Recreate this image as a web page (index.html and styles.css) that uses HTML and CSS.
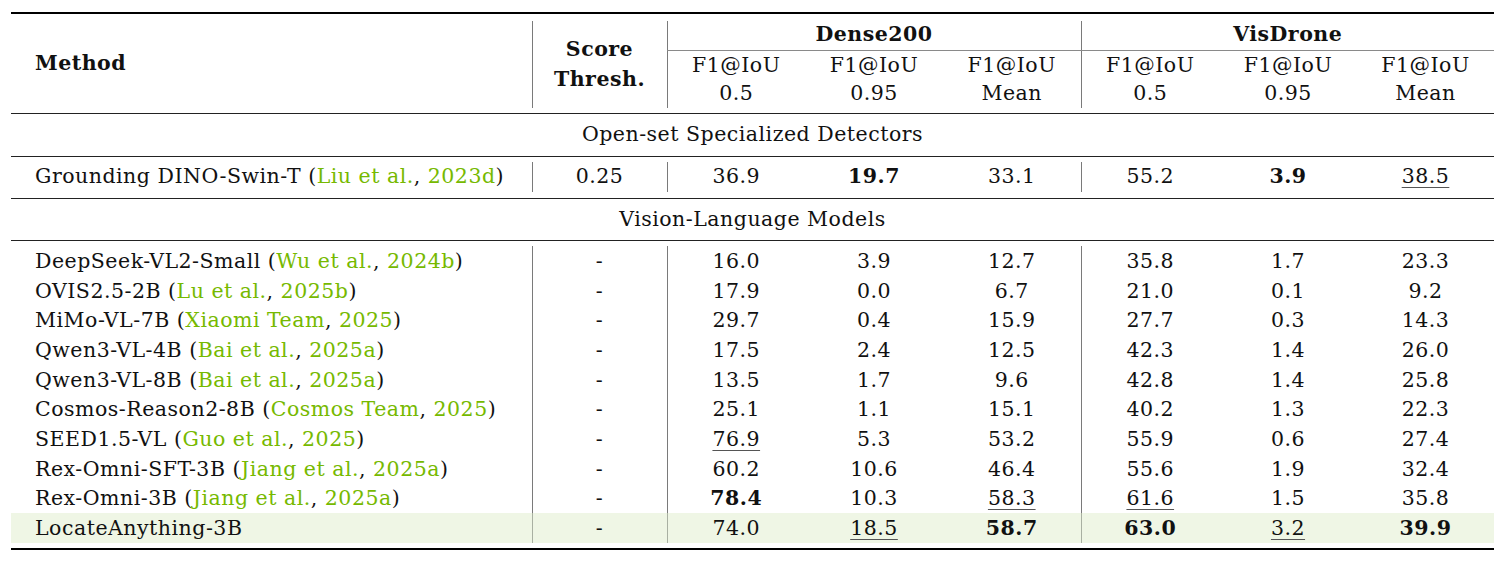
FILE: index.html
```html
<!DOCTYPE html>
<html>
<head>
<meta charset="utf-8">
<link rel="stylesheet" href="styles.css">
</head>
<body>
<table class="tbl">
  <colgroup>
    <col class="c-method"><col class="c-score">
    <col class="c-num"><col class="c-num"><col class="c-num">
    <col class="c-num"><col class="c-num"><col class="c-last">
  </colgroup>
  <tr class="rule"><td colspan="8"><div class="line thick"></div><div class="gap g7"></div></td></tr>
  <tr class="hA">
    <td rowspan="2" class="method b mhead">Method</td>
    <td rowspan="2" class="bl b ctr two score">Score<br>Thresh.</td>
    <td colspan="3" class="bl b ctr cmid">Dense200</td>
    <td colspan="3" class="bl b ctr cmid">VisDrone</td>
  </tr>
  <tr class="hB">
    <td class="bl ctr two">F1@IoU<br>0.5</td>
    <td class="ctr two">F1@IoU<br>0.95</td>
    <td class="ctr two">F1@IoU<br>Mean</td>
    <td class="bl ctr two">F1@IoU<br>0.5</td>
    <td class="ctr two">F1@IoU<br>0.95</td>
    <td class="ctr two">F1@IoU<br>Mean</td>
  </tr>
  <tr class="rule"><td colspan="8"><div class="gap g5"></div><div class="line"></div></td></tr>
  <tr class="sec"><td colspan="8" class="ctr">Open-set Specialized Detectors</td></tr>
  <tr class="rule"><td colspan="8"><div class="line"></div><div class="gap g5"></div></td></tr>
  <tr class="row one">
    <td class="method">Grounding DINO-Swin-T (<span class="cite">Liu et al.</span>, <span class="cite">2023d</span>)</td>
    <td class="bl ctr">0.25</td>
    <td class="bl ctr">36.9</td><td class="ctr b">19.7</td><td class="ctr">33.1</td>
    <td class="bl ctr">55.2</td><td class="ctr b">3.9</td><td class="ctr"><span class="u">38.5</span></td>
  </tr>
  <tr class="rule"><td colspan="8"><div class="gap g6"></div><div class="line"></div></td></tr>
  <tr class="sec sec2"><td colspan="8" class="ctr">Vision-Language Models</td></tr>
  <tr class="rule"><td colspan="8"><div class="line"></div><div class="gap g5"></div></td></tr>
  <tr class="row">
    <td class="method">DeepSeek-VL2-Small (<span class="cite">Wu et al.</span>, <span class="cite">2024b</span>)</td>
    <td class="bl ctr">-</td>
    <td class="bl ctr">16.0</td><td class="ctr">3.9</td><td class="ctr">12.7</td>
    <td class="bl ctr">35.8</td><td class="ctr">1.7</td><td class="ctr">23.3</td>
  </tr>
  <tr class="row">
    <td class="method">OVIS2.5-2B (<span class="cite">Lu et al.</span>, <span class="cite">2025b</span>)</td>
    <td class="bl ctr">-</td>
    <td class="bl ctr">17.9</td><td class="ctr">0.0</td><td class="ctr">6.7</td>
    <td class="bl ctr">21.0</td><td class="ctr">0.1</td><td class="ctr">9.2</td>
  </tr>
  <tr class="row">
    <td class="method">MiMo-VL-7B (<span class="cite">Xiaomi Team</span>, <span class="cite">2025</span>)</td>
    <td class="bl ctr">-</td>
    <td class="bl ctr">29.7</td><td class="ctr">0.4</td><td class="ctr">15.9</td>
    <td class="bl ctr">27.7</td><td class="ctr">0.3</td><td class="ctr">14.3</td>
  </tr>
  <tr class="row">
    <td class="method">Qwen3-VL-4B (<span class="cite">Bai et al.</span>, <span class="cite">2025a</span>)</td>
    <td class="bl ctr">-</td>
    <td class="bl ctr">17.5</td><td class="ctr">2.4</td><td class="ctr">12.5</td>
    <td class="bl ctr">42.3</td><td class="ctr">1.4</td><td class="ctr">26.0</td>
  </tr>
  <tr class="row">
    <td class="method">Qwen3-VL-8B (<span class="cite">Bai et al.</span>, <span class="cite">2025a</span>)</td>
    <td class="bl ctr">-</td>
    <td class="bl ctr">13.5</td><td class="ctr">1.7</td><td class="ctr">9.6</td>
    <td class="bl ctr">42.8</td><td class="ctr">1.4</td><td class="ctr">25.8</td>
  </tr>
  <tr class="row">
    <td class="method">Cosmos-Reason2-8B (<span class="cite">Cosmos Team</span>, <span class="cite">2025</span>)</td>
    <td class="bl ctr">-</td>
    <td class="bl ctr">25.1</td><td class="ctr">1.1</td><td class="ctr">15.1</td>
    <td class="bl ctr">40.2</td><td class="ctr">1.3</td><td class="ctr">22.3</td>
  </tr>
  <tr class="row">
    <td class="method">SEED1.5-VL (<span class="cite">Guo et al.</span>, <span class="cite">2025</span>)</td>
    <td class="bl ctr">-</td>
    <td class="bl ctr"><span class="u">76.9</span></td><td class="ctr">5.3</td><td class="ctr">53.2</td>
    <td class="bl ctr">55.9</td><td class="ctr">0.6</td><td class="ctr">27.4</td>
  </tr>
  <tr class="row">
    <td class="method">Rex-Omni-SFT-3B (<span class="cite">Jiang et al.</span>, <span class="cite">2025a</span>)</td>
    <td class="bl ctr">-</td>
    <td class="bl ctr">60.2</td><td class="ctr">10.6</td><td class="ctr">46.4</td>
    <td class="bl ctr">55.6</td><td class="ctr">1.9</td><td class="ctr">32.4</td>
  </tr>
  <tr class="row">
    <td class="method">Rex-Omni-3B (<span class="cite">Jiang et al.</span>, <span class="cite">2025a</span>)</td>
    <td class="bl ctr">-</td>
    <td class="bl ctr b">78.4</td><td class="ctr">10.3</td><td class="ctr"><span class="u">58.3</span></td>
    <td class="bl ctr"><span class="u">61.6</span></td><td class="ctr">1.5</td><td class="ctr">35.8</td>
  </tr>
  <tr class="row hl">
    <td class="method">LocateAnything-3B</td>
    <td class="bl ctr">-</td>
    <td class="bl ctr">74.0</td><td class="ctr"><span class="u">18.5</span></td><td class="ctr b">58.7</td>
    <td class="bl ctr b">63.0</td><td class="ctr"><span class="u">3.2</span></td><td class="ctr b">39.9</td>
  </tr>
  <tr class="rule"><td colspan="8"><div class="gap g5"></div><div class="line thick"></div></td></tr>
</table>
</body>
</html>
```
FILE: styles.css
```css
html, body {
  margin: 0;
  padding: 0;
  background: #fff;
}
body {
  padding-top: 12px;
  font-family: "DejaVu Serif", "Liberation Serif", serif;
  font-size: 20.5px;
  letter-spacing: 0.5px;
  color: #111;
}
.tbl {
  margin-left: 11px;
  width: 1483px;
  border-collapse: collapse;
  table-layout: fixed;
}
.c-method { width: 521px; }
.c-score { width: 135px; }
.c-num { width: 138px; }
.c-last { width: 137px; }
.tbl td {
  padding: 0;
  white-space: nowrap;
  vertical-align: middle;
  line-height: 20px;
}
.line { height: 1px; background: #222; }
.line.thick { height: 2px; background: #000; }
.g4 { height: 4px; }
.g5 { height: 5px; }
.g6 { height: 6px; }
.g7 { height: 7px; }
.bl { border-left: 1px solid #7a7a7a; }
.b { font-weight: bold; }
.ctr { text-align: center; }
.tbl td.method { padding-left: 24px; text-align: left; }
.hA { height: 29px; }
.hA td.cmid { border-bottom: 1px solid #8a8a8a; padding-bottom: 2px; }
.hB { height: 58px; }
.hB td { padding-bottom: 1px; }
.tbl td.mhead { padding-bottom: 4px; }
.tbl td.two { line-height: 28px; }
.tbl td.score { line-height: 30px; padding-bottom: 2px; }
.sec { height: 42px; }
.sec td { padding-bottom: 2px; }
.sec2 { height: 41px; }
.row { height: 29.7px; }
.row.one { height: 30px; }
.row.one td { padding-bottom: 2px; }
.cite { color: #76b900; }
.u {
  text-decoration: underline;
  text-decoration-color: #555;
  text-decoration-thickness: 1px;
  text-underline-offset: 4px;
}
.hl td { background: #eff6e5; }
.hl td.bl { border-left-color: #a9b0a2; }
```
